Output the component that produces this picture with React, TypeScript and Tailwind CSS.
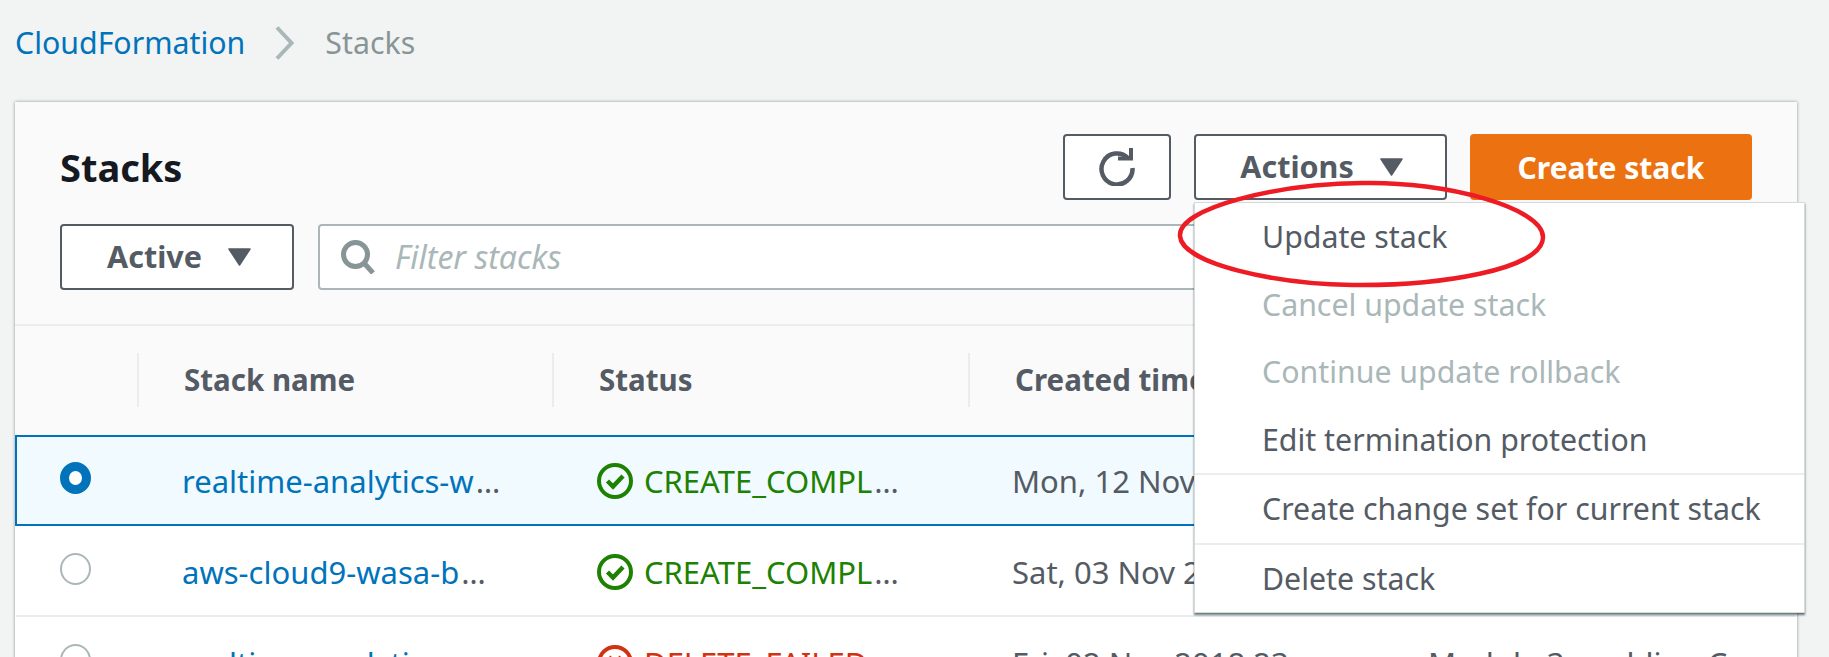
import React from "react";

const ff = { fontFamily: '"Noto Sans", sans-serif' };

function Caret() {
  return (
    <svg width="23" height="18" viewBox="0 0 23 18" className="shrink-0">
      <path d="M1 1h21L11.5 17z" fill="#545b64" stroke="#545b64" strokeWidth="1.5" strokeLinejoin="round" />
    </svg>
  );
}

const Dots = () => <span className="text-[#545b64] tracking-[4px] ml-[2px]">…</span>;

function Status({ ok, text, more }: { ok: boolean; text: string; more?: boolean }) {
  const c = ok ? "#1d8102" : "#d13212";
  return (
    <div className="flex items-center gap-[11px]" style={{ color: c }}>
      <svg width="36" height="36" viewBox="0 0 36 36" fill="none" className="shrink-0">
        <circle cx="18" cy="18" r="16" stroke={c} strokeWidth="4" />
        {ok ? <path d="M10.5 18l5.5 5.5 10-10.5" stroke={c} strokeWidth="4.5" /> : <path d="M12 12l12 12M24 12L12 24" stroke={c} strokeWidth="4" />}
      </svg>
      <span className="text-[31px] leading-[36px] whitespace-nowrap">{text}{more && <Dots />}</span>
    </div>
  );
}

function Radio({ on }: { on?: boolean }) {
  return on ? (
    <span className="block w-[31px] h-[32px] rounded-[50%] border-[9px] border-[#0073bb] bg-white" />
  ) : (
    <span className="block w-[31px] h-[32px] rounded-[50%] border-[2px] border-[#aab7b8] bg-white" />
  );
}

function Row({ selected, name, status, ok, created, extra, more }: { selected?: boolean; name: string; status: string; ok: boolean; created: string; extra?: string; more?: boolean }) {
  return (
    <div className={selected ? "flex items-start h-[91px] bg-[#f1faff] border-2 border-[#0073bb]" : "flex items-start h-[91px] border-2 border-transparent border-b-[#eaeded] bg-white"}>
      <div className="w-[165px] pl-[43px] pt-[25px] shrink-0"><Radio on={selected} /></div>
      <div className="w-[415px] pt-[26px] leading-[36px] shrink-0 text-[31px] text-[#0073bb] whitespace-nowrap">{name}<Dots /></div>
      <div className="w-[415px] pt-[26px] shrink-0"><Status ok={ok} text={status} more={more} /></div>
      <div className="w-[416px] pt-[26px] leading-[36px] shrink-0 text-[31px] text-[#545b64] whitespace-nowrap">{created}</div>
      {extra && <div className="pt-[26px] leading-[36px] text-[31px] text-[#545b64] whitespace-nowrap">{extra}</div>}
    </div>
  );
}

const Item = ({ children, off }: { children: string; off?: boolean }) => (
  <div className={off ? "h-[67.5px] flex items-center pl-[67px] text-[#aab7b8]" : "h-[67.5px] flex items-center pl-[67px] text-[#545b64]"}>{children}</div>
);

export default function App() {
  return (
    <div className="w-[1829px] h-[657px] overflow-hidden bg-[#f2f3f3] relative" style={ff}>
      <div className="flex items-center h-[86px] pl-[15px] text-[30.3px]">
        <span className="text-[#0073bb]">CloudFormation</span>
        <svg width="19" height="34" viewBox="0 0 19 34" fill="none" className="ml-[30px] mr-[31px]">
          <path d="M2 1.5l14.5 15.5L2 32.5" stroke="#aab7b8" strokeWidth="4" />
        </svg>
        <span className="text-[#879596]">Stacks</span>
      </div>
      <div className="ml-[15px] mr-[32px] mt-[16px] bg-[#fafafa] shadow-[0_0_3px_rgba(0,28,36,0.45)]">
        <div className="h-[224px] border-b-2 border-[#eaeded] pl-[45px]">
          <div className="flex items-center pt-[32px]">
            <h1 className="text-[38px] font-bold text-[#16191f] leading-[64px]">Stacks</h1>
            <div className="ml-auto mr-[45px] flex gap-[23px]">
              <button className="w-[108px] h-[66px] flex items-center justify-center bg-white border-2 border-[#545b64] rounded-[4px]">
                <svg width="38" height="38" viewBox="0 0 38 38" fill="none">
                  <path d="M30 10A15.5 15.5 0 1 0 34.5 20" stroke="#545b64" strokeWidth="4.5" />
                  <path d="M20 10.5h13V0" stroke="#545b64" strokeWidth="4" />
                </svg>
              </button>
              <button className="w-[253px] h-[66px] flex items-center justify-center gap-[26px] pl-[2px] bg-white border-2 border-[#545b64] rounded-[4px] text-[30.5px] font-bold text-[#545b64]">
                Actions <Caret />
              </button>
              <button className="w-[282px] h-[66px] bg-[#ec7211] rounded-[4px] text-[30px] font-bold text-white">Create stack</button>
            </div>
          </div>
          <div className="flex gap-[24px] mt-[24px] pr-[60px]">
            <button className="w-[234px] h-[66px] flex items-center justify-center gap-[26px] pl-[4px] bg-white border-2 border-[#545b64] rounded-[4px] text-[30.5px] font-bold text-[#545b64]">
              Active <Caret />
            </button>
            <div className="flex-1 h-[66px] flex items-center bg-white border-2 border-[#aab7b8] rounded-[4px] pl-[21px] gap-[20px]">
              <svg width="34" height="34" viewBox="0 0 34 34" fill="none">
                <circle cx="14.5" cy="14.5" r="12" stroke="#879596" strokeWidth="5" />
                <path d="M23 23l9 10" stroke="#879596" strokeWidth="5" />
              </svg>
              <span className="italic text-[32px] text-[#aab7b8]">Filter stacks</span>
            </div>
          </div>
        </div>
        <div className="flex items-center h-[109px] pb-[1px] text-[29.5px] font-bold text-[#545b64]">
          <div className="w-[124px] h-[54px] border-r-2 border-[#eaeded] shrink-0" />
          <div className="w-[415px] h-[54px] pl-[45px] border-r-2 border-[#eaeded] flex items-center shrink-0">Stack name</div>
          <div className="w-[416px] h-[54px] pl-[45px] border-r-2 border-[#eaeded] flex items-center shrink-0">Status</div>
          <div className="pl-[45px] whitespace-nowrap">Created time</div>
        </div>
        <Row selected name="realtime-analytics-w" status="CREATE_COMPL" more ok created="Mon, 12 Nov 2018" />
        <Row name="aws-cloud9-wasa-b" status="CREATE_COMPL" more ok created="Sat, 03 Nov 2018" />
        <Row name="realtime-analytics" status="DELETE_FAILED" ok={false} created="Fri, 02 Nov 2018 23:" extra="Module 3 enabling C" />
      </div>
      <div className="absolute left-[1194px] top-[202px] w-[611px] bg-white border border-[#d5dbdb] shadow-[0_2px_2px_rgba(0,28,36,0.6)] text-[30.3px]">
        <Item>Update stack</Item>
        <Item off>Cancel update stack</Item>
        <Item off>Continue update rollback</Item>
        <Item>Edit termination protection</Item>
        <div className="border-t-2 border-[#eaeded]"><Item>Create change set for current stack</Item></div>
        <div className="border-t-2 border-[#eaeded]"><Item>Delete stack</Item></div>
      </div>
      <svg className="absolute left-[1176px] top-[178px]" width="374" height="114" viewBox="0 0 374 114" fill="none">
        <path d="M186 5C270 3 367 30 367 59C367 92 262 108 176 107C100 106 6 86 4 58C2 30 100 6 186 5Z" stroke="#ed1c24" strokeWidth="4.5" />
      </svg>
    </div>
  );
}
